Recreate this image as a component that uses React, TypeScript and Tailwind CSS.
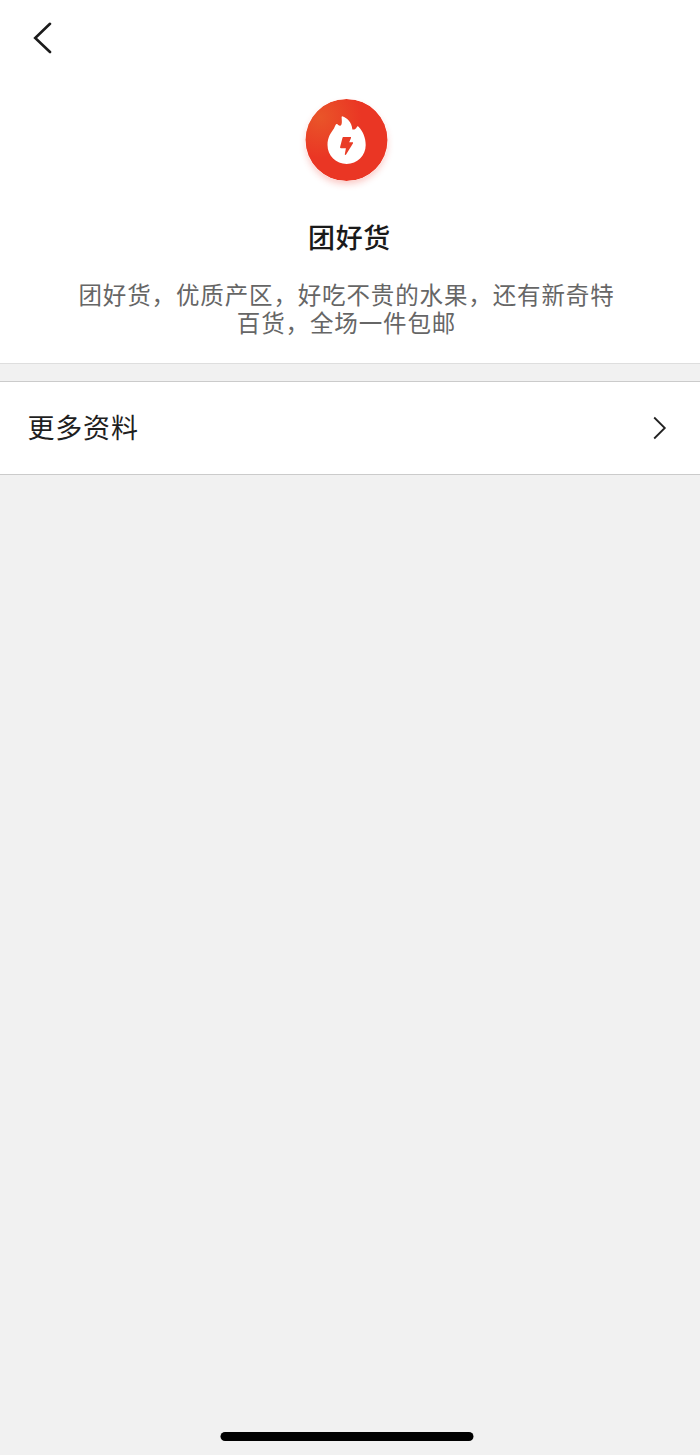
import React from 'react';

interface ProfileProps {
    name: string;
    description: string[];
}

const BackIcon: React.FC = () => (
    <svg className="w-6 h-8" viewBox="0 0 24 32" fill="none" stroke="#1b1b1b" strokeWidth="2.6">
        <path d="M19 1.8 L4.2 16 L19 30" strokeLinecap="round" />
    </svg>
);

const FlameLogo: React.FC = () => (
    <svg className="w-[83px] h-[82px] rounded-full shadow-[0_4px_7px_-1px_rgba(236,52,36,0.28)]" viewBox="-0.5 0 83 82">
        <defs>
            <radialGradient id="logoFill" cx="0.18" cy="0.22" r="0.5">
                <stop offset="0" stopColor="#e95529" />
                <stop offset="1" stopColor="#ea3624" />
            </radialGradient>
        </defs>
        <circle cx="41" cy="41" r="41" fill="url(#logoFill)" />
        <path
            d="M37.2 17.4 C41 18.6 46.2 22.3 46.9 30.6 C49.6 30.8 50.8 29.3 51.3 27.9 C51.7 27 52.7 27.1 53.3 28 C57.5 32.5 60.2 39 60.2 46 C60.2 57 51.6 64.9 41.2 64.9 C30.6 64.9 22 57 22 46 C22 38 25.5 34 28.6 29.3 C29.4 27.8 29.6 26.5 30.4 25.6 C31 24.9 31.7 25 32.2 25.5 C33.1 26.3 33.8 27 35.2 26.5 C37 25 36.2 21 36.1 18.2 C36.1 17.5 36.6 17.2 37.2 17.4 Z"
            fill="#fff"
        />
        <path
            d="M37.9 38 H44.8 C45.5 38 45.8 38.5 45.5 39.1 L43.7 43.3 H46.9 C47.6 43.3 47.8 43.9 47.4 44.4 L40.6 55.6 C40.1 56.3 39.1 56.1 39.3 55.2 L40.4 49.3 H35.5 C34.7 49.3 34.4 48.8 34.6 48.1 L37 38.7 C37.1 38.2 37.4 38 37.9 38 Z"
            fill="#e93c26"
        />
    </svg>
);

const Profile: React.FC<ProfileProps> = ({ name, description }) => (
    <section className="flex h-[288px] flex-col items-center border-b border-[#dedede] pr-[7px]">
        <div className="mt-[23px]"><FlameLogo /></div>
        <h1 className="mt-[36px] ml-[6px] text-[27px] leading-10 font-medium tracking-[0.7px] text-[#1a1a1a]">{name}</h1>
        <p className="mt-[23px] text-center text-[23.5px] leading-[28px] tracking-[0.87px] text-[#666]">
            {description.map(line => (
                <span key={line} className="block whitespace-nowrap">{line}</span>
            ))}
        </p>
    </section>
);

export default function App() {
    return (
        <div className="flex h-[1455px] w-[700px] flex-col bg-[#f1f1f1] font-['Noto_Sans_CJK_SC',sans-serif]">
            <div className="bg-white">
                <header className="flex h-[76px] items-center pl-[31px]">
                    <BackIcon />
                </header>
                <Profile
                    name="团好货"
                    description={['团好货，优质产区，好吃不贵的水果，还有新奇特', '百货，全场一件包邮']}
                />
            </div>

            <div className="mt-[17px] flex h-[94px] items-center justify-between border-y border-[#cbcbcb] bg-white pr-[32px] pl-[27.5px]">
                <span className="-mt-0.5 text-[27px] leading-10 tracking-[0.8px] text-[#1f1f1f]">更多资料</span>
                <svg className="h-6 w-4" viewBox="0 0 16 24" fill="none" stroke="#222" strokeWidth="1.8">
                    <path d="M2.2 1.5 L12.8 12 L2.2 22.5" />
                </svg>
            </div>

            {/* home indicator */}
            <div className="mx-auto mt-auto mb-[14px] h-[9px] w-[253px] -translate-x-[3.5px] rounded-full bg-black" />
        </div>
    );
}
